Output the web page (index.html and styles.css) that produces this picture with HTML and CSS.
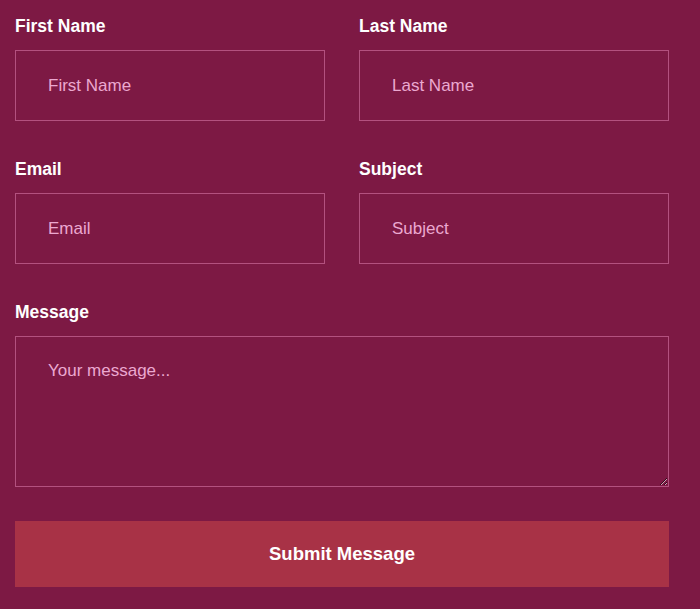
FILE: index.html
```html
<!DOCTYPE html>
<html lang="en">
<head>
  <meta charset="UTF-8">
  <meta name="viewport" content="width=device-width, initial-scale=1.0">
  <title>Contact</title>
  <link rel="stylesheet" href="styles.css">
</head>
<body>
  <form class="contact-form" onsubmit="return false">
    <div class="field">
      <label for="firstName">First Name</label>
      <input type="text" id="firstName" placeholder="First Name">
    </div>
    <div class="field">
      <label for="lastName">Last Name</label>
      <input type="text" id="lastName" placeholder="Last Name">
    </div>
    <div class="field">
      <label for="email">Email</label>
      <input type="email" id="email" placeholder="Email">
    </div>
    <div class="field">
      <label for="subject">Subject</label>
      <input type="text" id="subject" placeholder="Subject">
    </div>
    <div class="field full">
      <label for="message">Message</label>
      <textarea id="message" placeholder="Your message..."></textarea>
    </div>
    <button type="submit" class="submit-btn">Submit Message</button>
  </form>
</body>
</html>
```

FILE: styles.css
```css
body {
  font-family: 'Liberation Sans', Arial, sans-serif;
  background-color: #7d1944;
  margin: 0;
  padding: 15px 15px;
  color: white;
}
.contact-form {
  width: 654px;
  display: grid;
  grid-template-columns: 1fr 1fr;
  column-gap: 34px;
  row-gap: 37px;
}
.field { display: flex; flex-direction: column; }
.field.full { grid-column: 1 / -1; }
.field label {
  font-size: 17.5px;
  font-weight: bold;
  line-height: 22px;
  margin-bottom: 13px;
}
.field input,
.field textarea {
  box-sizing: border-box;
  background: transparent;
  border: 1px solid #b3517f;
  color: white;
  font-family: inherit;
  font-size: 17px;
  padding: 0 32px;
  outline: none;
}
.field input { height: 71px; }
.field textarea {
  height: 151px;
  padding-top: 24px;
  resize: vertical;
}
.field input::placeholder,
.field textarea::placeholder { color: #eba8d0; }
.submit-btn {
  grid-column: 1 / -1;
  margin-top: -3px;
  height: 66px;
  border: none;
  background: #a83246;
  color: white;
  font-family: inherit;
  font-size: 18.5px;
  font-weight: bold;
  cursor: pointer;
}
```
